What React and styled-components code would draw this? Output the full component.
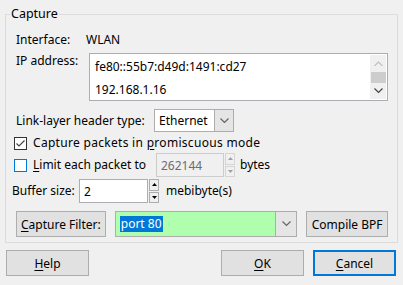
import React from 'react';
import styled, { createGlobalStyle } from 'styled-components';

const GlobalStyle = createGlobalStyle`
    html, body {
        margin: 0;
        padding: 0;
        background: #f0f0f0;
    }
    body {
        font-family: "Noto Sans", "Open Sans", sans-serif;
        font-size: 12px;
        color: #000;
    }
`;

const Dialog = styled.div`
    width: 403px;
    height: 285px;
    background: #f0f0f0;
    overflow: hidden;
`;

const Group = styled.div`
    position: relative;
    margin: 14px 5px 0 5px;
    border: 1px solid #dcdcdc;
    padding: 17px 9px 5px 10px;
    display: flex;
    flex-direction: column;
`;

const GroupTitle = styled.span`
    position: absolute;
    top: -9px;
    left: 4px;
    padding: 0 1px;
    line-height: 16px;
    font-size: 12.5px;
    background: #f0f0f0;
`;

const Row = styled.div`
    display: flex;
    align-items: ${(p) => p.align || 'center'};
    margin-top: ${(p) => p.mt || 0}px;
    margin-left: ${(p) => p.ml || 0}px;
    height: ${(p) => p.h}px;
`;

const Label = styled.span`
    width: ${(p) => (p.w ? `${p.w}px` : 'auto')};
    flex-shrink: 0;
    line-height: 16px;
    white-space: nowrap;
    letter-spacing: ${(p) => p.ls || 0}px;
`;

const ListBox = styled.div`
    width: 299px;
    height: 48px;
    box-sizing: border-box;
    border: 1px solid #abadb3;
    background: #fff;
    display: flex;
`;

const ListItems = styled.div`
    flex: 1;
    padding: 4px 0 0 5px;
    overflow: hidden;
`;

const ListItem = styled.div`
    height: 23px;
    line-height: 18px;
`;

const ScrollBar = styled.div`
    width: 16px;
    margin: 1px 1px 1px 0;
    background: #f0f0f0;
    display: flex;
    flex-direction: column;
    align-items: center;
`;

const ScrollArrow = styled.div`
    height: 17px;
    display: flex;
    align-items: center;
    justify-content: center;
`;

const ScrollThumb = styled.div`
    width: 15px;
    height: 11px;
    background: #cdcdcd;
`;

const ScrollTrack = styled.div`
    flex: 1;
    display: flex;
    align-items: flex-start;
`;

const Combo = styled.div`
    width: ${(p) => p.w}px;
    height: ${(p) => p.h || 23}px;
    box-sizing: border-box;
    border: 1px solid #adadad;
    background: ${(p) => p.bg || '#fff'};
    display: flex;
    align-items: center;
    margin-left: ${(p) => p.ml || 0}px;
`;

const ComboText = styled.div`
    flex: 1;
    padding-left: 4px;
    display: flex;
    align-items: center;
    white-space: nowrap;
`;

const ComboButton = styled.div`
    width: ${(p) => p.w || 19}px;
    align-self: stretch;
    box-sizing: border-box;
    border-left: 1px solid #adadad;
    background: #e5e5e5;
    display: flex;
    align-items: center;
    justify-content: center;
`;

const Selected = styled.span`
    background: #0078d7;
    color: #fff;
    padding: 0 1px;
    line-height: 16px;
`;

const CheckBox = styled.span`
    width: 13px;
    height: 13px;
    box-sizing: border-box;
    border: 1px solid ${(p) => (p.focus ? '#0078d7' : '#333')};
    background: #fff;
    display: flex;
    align-items: center;
    justify-content: center;
    margin-right: 6px;
    flex-shrink: 0;
`;

const Spin = styled.div`
    display: flex;
    height: ${(p) => p.h}px;
    margin-right: ${(p) => p.mr || 0}px;
`;

const SpinInput = styled.div`
    width: ${(p) => p.w}px;
    box-sizing: border-box;
    border: 1px solid ${(p) => (p.disabled ? '#cccccc' : '#abadb3')};
    background: ${(p) => (p.disabled ? '#f0f0f0' : '#fff')};
    color: ${(p) => (p.disabled ? '#6d6d6d' : '#000')};
    padding-left: 4px;
    display: flex;
    align-items: center;
`;

const SpinArrows = styled.div`
    width: 10px;
    margin-left: 1px;
    display: flex;
    flex-direction: column;
    gap: 1px;
`;

const SpinArrow = styled.div`
    flex: 1;
    box-sizing: border-box;
    border: 1px solid ${(p) => (p.disabled ? '#d5d5d5' : '#adadad')};
    background: #f0f0f0;
    display: flex;
    align-items: center;
    justify-content: center;
`;

const Button = styled.div`
    width: ${(p) => p.w}px;
    height: ${(p) => p.h || 26}px;
    box-sizing: border-box;
    border: ${(p) => (p.primary ? '2px solid #0078d7' : '1px solid #adadad')};
    background: #e1e1e1;
    display: flex;
    align-items: center;
    justify-content: center;
    white-space: nowrap;
    margin-left: ${(p) => p.ml || 0}px;
`;

const ButtonBar = styled.div`
    display: flex;
    margin: 7px 7px 0 6px;
    height: 26px;
`;

const Spacer = styled.div`
    flex: 1;
`;

const U = styled.span`
    text-decoration: underline;
    text-underline-offset: 2px;
`;

const Chevron = ({ color = '#555', up = false, size = 9 }) => (
    <svg width={size} height={size / 2 + 1} viewBox="0 0 9 5.5">
        <path
            d={up ? 'M0.5 5 L4.5 1 L8.5 5' : 'M0.5 0.5 L4.5 4.5 L8.5 0.5'}
            fill="none"
            stroke={color}
            strokeWidth="1.2"
        />
    </svg>
);

const Tri = ({ up, color = '#000' }) => (
    <svg width="5" height="3" viewBox="0 0 5 3">
        <path d={up ? 'M0 3 L2.5 0 L5 3 Z' : 'M0 0 L2.5 3 L5 0 Z'} fill={color} />
    </svg>
);

const App = () => {
    return (
        <Dialog>
            <GlobalStyle />
            <Group>
                <GroupTitle>Capture</GroupTitle>

                <Row h={16}>
                    <Label w={70}>Interface:</Label>
                    <Label>WLAN</Label>
                </Row>

                <Row h={48} mt={5} align="flex-start">
                    <Label w={73}>IP address:</Label>
                    <ListBox>
                        <ListItems>
                            <ListItem>fe80::55b7:d49d:1491:cd27</ListItem>
                            <ListItem>192.168.1.16</ListItem>
                        </ListItems>
                        <ScrollBar>
                            <ScrollArrow>
                                <Chevron up color="#c0c0c0" />
                            </ScrollArrow>
                            <ScrollTrack>
                                <ScrollThumb />
                            </ScrollTrack>
                            <ScrollArrow>
                                <Chevron color="#444" />
                            </ScrollArrow>
                        </ScrollBar>
                    </ListBox>
                </Row>

                <Row h={23} mt={8}>
                    <Label w={138}>Link-layer header type:</Label>
                    <Combo w={80}>
                        <ComboText>Ethernet</ComboText>
                        <ComboButton>
                            <Chevron color="#666" />
                        </ComboButton>
                    </Combo>
                </Row>

                <Row h={16} mt={3} ml={-2}>
                    <CheckBox>
                        <svg width="11" height="11" viewBox="0 0 11 11">
                            <path d="M1.5 5.5 L4 8 L9.5 2.5" fill="none" stroke="#444" strokeWidth="1.2" />
                        </svg>
                    </CheckBox>
                    <Label ls={0.3}>
                        Capture packets in <U>p</U>romiscuous mode
                    </Label>
                </Row>

                <Row h={24} mt={2} ml={-2}>
                    <CheckBox focus />
                    <Label w={123}>
                        <U>L</U>imit each packet to
                    </Label>
                    <Spin h={24} mr={5}>
                        <SpinInput w={68} disabled>262144</SpinInput>
                        <SpinArrows>
                            <SpinArrow disabled>
                                <Tri up color="#a0a0a0" />
                            </SpinArrow>
                            <SpinArrow disabled>
                                <Tri color="#a0a0a0" />
                            </SpinArrow>
                        </SpinArrows>
                    </Spin>
                    <Label>bytes</Label>
                </Row>

                <Row h={24} mt={2} ml={-4}>
                    <Label w={67}>Buffer size:</Label>
                    <Spin h={24} mr={7}>
                        <SpinInput w={69}>2</SpinInput>
                        <SpinArrows>
                            <SpinArrow>
                                <Tri up />
                            </SpinArrow>
                            <SpinArrow>
                                <Tri />
                            </SpinArrow>
                        </SpinArrows>
                    </Spin>
                    <Label>mebibyte(s)</Label>
                </Row>

                <Row h={26} mt={8}>
                    <Button w={90}>
                        <U>C</U>apture Filter:
                    </Button>
                    <Combo w={183} h={26} bg="#afffaf" ml={9}>
                        <ComboText>
                            <Selected>port 80</Selected>
                        </ComboText>
                        <ComboButton w={21}>
                            <Chevron color="#666" />
                        </ComboButton>
                    </Combo>
                    <Button w={82} ml={9}>
                        Compile BPF
                    </Button>
                </Row>
            </Group>

            <ButtonBar>
                <Button w={83}>
                    <U>H</U>elp
                </Button>
                <Spacer />
                <Button w={83}>
                    <U>O</U>K
                </Button>
                <Button w={83} ml={9} primary>
                    <U>C</U>ancel
                </Button>
            </ButtonBar>
        </Dialog>
    );
};

export default App;
